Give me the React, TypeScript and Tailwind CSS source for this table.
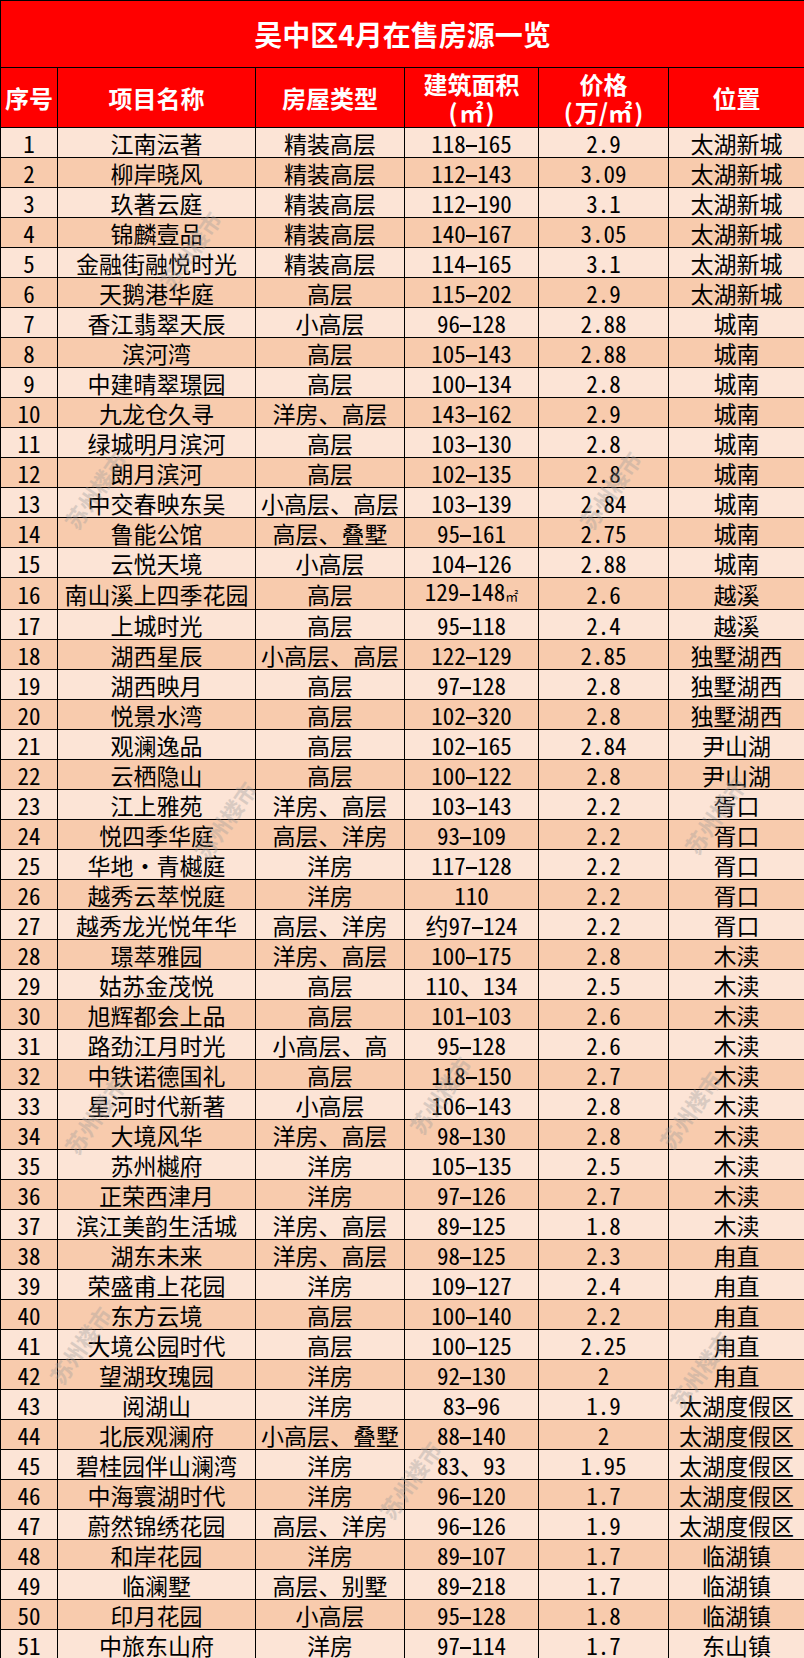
const rows: [string, string, string, string, string][] = [
  ["江南沄著", "精装高层", "118-165", "2.9", "太湖新城"],
  ["柳岸晓风", "精装高层", "112-143", "3.09", "太湖新城"],
  ["玖著云庭", "精装高层", "112-190", "3.1", "太湖新城"],
  ["锦麟壹品", "精装高层", "140-167", "3.05", "太湖新城"],
  ["金融街融悦时光", "精装高层", "114-165", "3.1", "太湖新城"],
  ["天鹅港华庭", "高层", "115-202", "2.9", "太湖新城"],
  ["香江翡翠天辰", "小高层", "96-128", "2.88", "城南"],
  ["滨河湾", "高层", "105-143", "2.88", "城南"],
  ["中建晴翠璟园", "高层", "100-134", "2.8", "城南"],
  ["九龙仓久寻", "洋房、高层", "143-162", "2.9", "城南"],
  ["绿城明月滨河", "高层", "103-130", "2.8", "城南"],
  ["朗月滨河", "高层", "102-135", "2.8", "城南"],
  ["中交春映东吴", "小高层、高层", "103-139", "2.84", "城南"],
  ["鲁能公馆", "高层、叠墅", "95-161", "2.75", "城南"],
  ["云悦天境", "小高层", "104-126", "2.88", "城南"],
  ["南山溪上四季花园", "高层", "129-148㎡", "2.6", "越溪"],
  ["上城时光", "高层", "95-118", "2.4", "越溪"],
  ["湖西星辰", "小高层、高层", "122-129", "2.85", "独墅湖西"],
  ["湖西映月", "高层", "97-128", "2.8", "独墅湖西"],
  ["悦景水湾", "高层", "102-320", "2.8", "独墅湖西"],
  ["观澜逸品", "高层", "102-165", "2.84", "尹山湖"],
  ["云栖隐山", "高层", "100-122", "2.8", "尹山湖"],
  ["江上雅苑", "洋房、高层", "103-143", "2.2", "胥口"],
  ["悦四季华庭", "高层、洋房", "93-109", "2.2", "胥口"],
  ["华地·青樾庭", "洋房", "117-128", "2.2", "胥口"],
  ["越秀云萃悦庭", "洋房", "110", "2.2", "胥口"],
  ["越秀龙光悦年华", "高层、洋房", "约97-124", "2.2", "胥口"],
  ["璟萃雅园", "洋房、高层", "100-175", "2.8", "木渎"],
  ["姑苏金茂悦", "高层", "110、134", "2.5", "木渎"],
  ["旭辉都会上品", "高层", "101-103", "2.6", "木渎"],
  ["路劲江月时光", "小高层、高", "95-128", "2.6", "木渎"],
  ["中铁诺德国礼", "高层", "118-150", "2.7", "木渎"],
  ["星河时代新著", "小高层", "106-143", "2.8", "木渎"],
  ["大境风华", "洋房、高层", "98-130", "2.8", "木渎"],
  ["苏州樾府", "洋房", "105-135", "2.5", "木渎"],
  ["正荣西津月", "洋房", "97-126", "2.7", "木渎"],
  ["滨江美韵生活城", "洋房、高层", "89-125", "1.8", "木渎"],
  ["湖东未来", "洋房、高层", "98-125", "2.3", "甪直"],
  ["荣盛甫上花园", "洋房", "109-127", "2.4", "甪直"],
  ["东方云境", "高层", "100-140", "2.2", "甪直"],
  ["大境公园时代", "高层", "100-125", "2.25", "甪直"],
  ["望湖玫瑰园", "洋房", "92-130", "2", "甪直"],
  ["阅湖山", "洋房", "83-96", "1.9", "太湖度假区"],
  ["北辰观澜府", "小高层、叠墅", "88-140", "2", "太湖度假区"],
  ["碧桂园伴山澜湾", "洋房", "83、93", "1.95", "太湖度假区"],
  ["中海寰湖时代", "洋房", "96-120", "1.7", "太湖度假区"],
  ["蔚然锦绣花园", "高层、洋房", "96-126", "1.9", "太湖度假区"],
  ["和岸花园", "洋房", "89-107", "1.7", "临湖镇"],
  ["临澜墅", "高层、别墅", "89-218", "1.7", "临湖镇"],
  ["印月花园", "小高层", "95-128", "1.8", "临湖镇"],
  ["中旅东山府", "洋房", "97-114", "1.7", "东山镇"],
];

// watermark spots over the table
const marks = [
  [190, 250], [95, 490], [610, 490], [225, 820], [715, 815],
  [440, 1095], [690, 1110], [95, 1115], [80, 1345], [700, 1370], [410, 1480],
];

// wide dash, like the sheet's font draws it
function Dash() {
  return <span className="inline-block w-[0.5em] align-middle"><span className="block h-[2px] w-[0.46em] mx-auto bg-black" /></span>;
}

function Area({ v }: { v: string }) {
  const unit = v.endsWith("㎡");
  const body = unit ? v.slice(0, -1) : v;
  const parts = body.split("-");
  return (
    <>
      {parts.map((p, i) => (
        <span key={i}>
          {i > 0 && <Dash />}
          {p}
        </span>
      ))}
      {unit && <span className="text-[13px]">㎡</span>}
    </>
  );
}

function Price({ v }: { v: string }) {
  const [a, b] = v.split(".");
  if (b === undefined) return <>{a}</>;
  return (
    <>
      {a}
      <span className="inline-block w-[0.5em] text-left">.</span>
      {b}
    </>
  );
}

// full-width brackets, kept wide
function Paren({ children }: { children: React.ReactNode }) {
  return (
    <>
      <span className="inline-block w-[1em] text-right pr-[2px]">(</span>
      {children}
      <span className="inline-block w-[1em] text-left pl-[2px]">)</span>
    </>
  );
}

export default function App() {
  const cell = "border border-black text-center align-middle h-[30px] p-0 leading-[26px] whitespace-nowrap";
  const head = "border border-black text-center align-middle p-0 text-white font-bold text-[24px] leading-[28px]";
  return (
    <div
      className="relative w-[804px] bg-white text-black"
      style={{ fontFamily: '"Noto Sans CJK SC", "Noto Sans", sans-serif' }}
    >
      <table className="w-[804px] table-fixed border-collapse">
        <colgroup>
          <col className="w-[57px]" />
          <col className="w-[198px]" />
          <col className="w-[149px]" />
          <col className="w-[134px]" />
          <col className="w-[130px]" />
          <col className="w-[136px]" />
        </colgroup>
        <thead>
          <tr>
            <th colSpan={6} className="border border-black bg-[#ff0000] h-[67px] p-0 text-white font-bold text-[28px] leading-[34px]">
              吴中区4月在售房源一览
            </th>
          </tr>
          <tr className="bg-[#ff0000]">
            <th className={`${head} h-[60px]`}>序号</th>
            <th className={head}>项目名称</th>
            <th className={head}>房屋类型</th>
            <th className={head}>
              建筑面积
              <br />
              <Paren>㎡</Paren>
            </th>
            <th className={head}>
              价格
              <br />
              <Paren>万/㎡</Paren>
            </th>
            <th className={head}>位置</th>
          </tr>
        </thead>
        <tbody className="text-[23px] [font-feature-settings:'hwid']">
          {rows.map((r, i) => (
            <tr key={i} className={i % 2 === 0 ? "bg-[#fce4d6]" : "bg-[#f8cbad]"}>
              <td className={cell}>{i + 1}</td>
              <td className={cell}>{r[0]}</td>
              <td className={cell}>{r[1]}</td>
              <td className={cell}>
                <Area v={r[2]} />
              </td>
              <td className={cell}>
                <Price v={r[3]} />
              </td>
              <td className={cell}>{r[4]}</td>
            </tr>
          ))}
        </tbody>
      </table>
      {marks.map(([x, y], i) => (
        <div
          key={i}
          className="pointer-events-none absolute -translate-x-1/2 -translate-y-1/2 -rotate-[55deg] whitespace-nowrap text-[22px] font-bold text-[#9b9b9b] opacity-35"
          style={{ left: x, top: y }}
        >
          苏州楼市
        </div>
      ))}
    </div>
  );
}
